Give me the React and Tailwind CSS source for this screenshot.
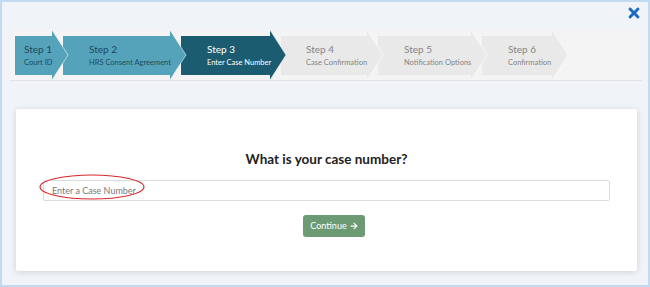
import React from 'react';
import { FaTimes, FaArrowRight } from 'react-icons/fa';

const steps = [
  { n: 'Step 1', label: 'Court ID', w: 'w-[37px]', pad: 'pl-[9px]', state: 'done' },
  { n: 'Step 2', label: 'HRS Consent Agreement', w: 'w-[107px]', pad: 'pl-[26px]', state: 'done' },
  { n: 'Step 3', label: 'Enter Case Number', w: 'w-[89px]', pad: 'pl-[26px]', state: 'active' },
  { n: 'Step 4', label: 'Case Confirmation', w: 'w-[86px]', pad: 'pl-[25px]', state: 'todo' },
  { n: 'Step 5', label: 'Notification Options', w: 'w-[93px]', pad: 'pl-[26px]', state: 'todo' },
  { n: 'Step 6', label: 'Confirmation', w: 'w-[70px]', pad: 'pl-[26px]', state: 'todo' },
];

const styles = {
  done: { box: 'bg-[#55a3bb] text-[#1d4a5b]', fill: '#55a3bb' },
  active: { box: 'bg-[#1b5c70] text-white', fill: '#1b5c70' },
  todo: { box: 'bg-[#e9e9e9] text-[#858585]', fill: '#e9e9e9' },
};

const Step = ({ step }) => {
  const s = styles[step.state];
  return (
    <div className={`relative shrink-0 h-[39px] ${step.w} ${step.pad} ${s.box} flex flex-col justify-center whitespace-nowrap`}>
      <span className="relative z-20 text-[10px] leading-[13px]">{step.n}</span>
      <span className="relative z-20 text-[7.5px] leading-[11px] mt-[1px]">{step.label}</span>
      <svg className="absolute left-full top-[-6px] w-[16px] h-[50px] z-10 overflow-visible" viewBox="0 0 16 50">
        <polygon points="0,0 16,25 0,50" fill={s.fill} />
        <polyline points="0,0 16,25 0,50" fill="none" stroke="#ffffff" strokeOpacity="0.55" strokeWidth="1" />
      </svg>
    </div>
  );
};

const App = () => {
  return (
    <div className="w-[650px] h-[287px] box-border border-2 border-[#c2daf1] bg-[#f0f4f9] font-['Lato',sans-serif] flex flex-col">
      <div className="h-[28px] flex justify-end items-start pt-[3px] pr-[6px]">
        <FaTimes className="text-[#1a69c4] w-[16px] h-[16px]" />
      </div>

      <div className="ml-[8px] mr-[6px] h-[51px] bg-[#f4f4f4] border-b border-[#e2e2e2] flex items-center pl-[5px] gap-[11px]">
        {steps.map((st) => (
          <Step key={st.n} step={st} />
        ))}
      </div>

      <div className="mt-[28px] ml-[14px] mr-[11px] h-[162px] bg-white rounded-[2px] shadow-[0_1px_6px_rgba(0,0,0,0.14)] pt-[41px] px-[27px] flex flex-col">
        <h2 className="text-center text-[13.5px] leading-[18px] font-bold text-[#222]">What is your case number?</h2>
        <div className="relative mt-[8px]">
          <input
            className="w-full h-[21px] border border-[#dcdcdc] rounded-[2px] px-[8px] text-[9px] placeholder:text-[#7a7a7a] outline-none"
            placeholder="Enter a Case Number"
          />
          <svg className="absolute left-[-4px] top-[-2px] w-[106px] h-[26px] pointer-events-none" viewBox="0 0 106 26">
            <ellipse cx="53" cy="13" rx="52" ry="12" fill="none" stroke="#d9262b" strokeWidth="1.1" />
          </svg>
        </div>
        <div className="mt-[14px] flex justify-center pl-[15px]">
          <button className="h-[22px] px-[7px] bg-[#6b9a73] rounded-[3px] text-white text-[9px] flex items-center gap-[3px]">
            Continue
            <FaArrowRight className="w-[8px] h-[8px]" />
          </button>
        </div>
      </div>
    </div>
  );
};

export default App;
